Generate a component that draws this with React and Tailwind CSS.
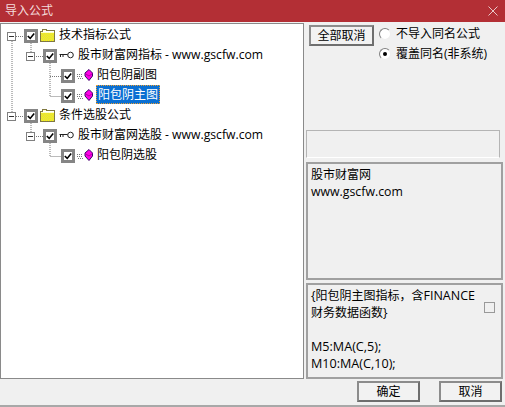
import React from 'react';

const FONT = '"Open Sans", "Noto Sans CJK SC", sans-serif';

const Expander = () => (
  <span className="w-[9px] h-[9px] border border-[#808080] bg-white flex items-center justify-center shrink-0">
    <span className="w-[5px] h-px bg-[#333]" />
  </span>
);

const Check = () => (
  <span className="w-[14px] h-[14px] border-[3px] border-[#858585] bg-white flex items-center justify-center shrink-0">
    <svg width="10" height="10" viewBox="0 0 10 10">
      <path d="M1 5 L4 8 L9 2" fill="none" stroke="#000" strokeWidth="2" />
    </svg>
  </span>
);

const Folder = ({ id }) => (
  <svg width="16" height="13" viewBox="0 0 16 13" className="shrink-0 -mr-[2px] -mt-[2px]" shapeRendering="crispEdges">
    <defs>
      <pattern id={id} width="2" height="2" patternUnits="userSpaceOnUse">
        <rect width="2" height="2" fill="#ffff00" />
        <rect width="1" height="1" fill="#d8d060" />
        <rect x="1" y="1" width="1" height="1" fill="#d8d060" />
      </pattern>
    </defs>
    <rect x="1" y="3" width="14" height="9" fill={`url(#${id})`} />
    <path d="M2.5 0.5 H6.5 V1.5 H14.5 V12.5 H0.5 V2.5 H2.5 Z" fill="none" stroke="#807840" />
    <path d="M1 3.5 H14 M3 1.5 H6" stroke="#ffffc8" />
  </svg>
);

const KeyIcon = () => (
  <svg width="15" height="9" viewBox="0 0 15 9" className="shrink-0 -mr-px -mt-[2px]">
    <circle cx="11.5" cy="4" r="2.8" fill="#fff" stroke="#222" />
    <path d="M0.5 3.5 L8.5 3.5 M1.5 3.5 L1.5 6 M4 3.5 L4 6" stroke="#222" fill="none" />
  </svg>
);

const FormulaIcon = () => (
  <svg width="16" height="12" viewBox="0 0 16 12" className="shrink-0 -mr-px -mt-[2px]">
    <path d="M0 5.5 H5 M0 7.5 H6 M1 9.5 H6" stroke="#777" strokeDasharray="1 1" />
    <path d="M12 0.5 L15.5 4 L15.5 7 L12 11.5 L8 7 L8 4 Z" fill="#ff00e8" stroke="#380868" />
    <path d="M8 4.5 L12 7 L15.5 4.5" fill="none" stroke="#b000a0" />
  </svg>
);

const Row = ({ indent, expander, icon, label, selected }) => (
  <div className="h-5 flex items-center" style={{ paddingLeft: indent }}>
    {expander && <span className="mr-[8px]"><Expander /></span>}
    <Check />
    <span className="ml-[2px] mr-[4px] flex items-center">{icon}</span>
    {selected ? (
      <span className="h-[19px] mb-[3px] px-px flex items-center text-white bg-[#0a6fd2] border border-dotted border-[#f0a030]">{label}</span>
    ) : (
      <span className="px-px mb-[2px]">{label}</span>
    )}
  </div>
);

const Site = () => <span className="text-[12.2px]">www.gscfw.com</span>;

const Tree = () => (
  <div className="relative w-[304px] border border-[#8a8a8a] bg-white pt-[2px] text-[12px] text-black">
    {/* dotted connectors */}
    <svg width="110" height="150" className="absolute left-0 top-0" fill="none" stroke="#777" strokeDasharray="1 1">
      <path d="M11 17 V92" />
      <path d="M15 12.5 H23" />
      <path d="M30 19 V28" />
      <path d="M35 32.5 H42" />
      <path d="M49 39 V72.5 H61 M49 52.5 H61" />
      <path d="M15 92.5 H23" />
      <path d="M30 99 V108" />
      <path d="M35 112.5 H42" />
      <path d="M49 119 V132.5 H61" />
    </svg>
    <div className="relative">
      <Row indent={6} expander icon={<Folder id="dither1" />} label="技术指标公式" />
      <Row indent={25} expander icon={<KeyIcon />} label={<>股市财富网指标 - <Site /></>} />
      <Row indent={60} icon={<FormulaIcon />} label="阳包阴副图" />
      <Row indent={60} icon={<FormulaIcon />} label="阳包阴主图" selected />
      <Row indent={6} expander icon={<Folder id="dither2" />} label="条件选股公式" />
      <Row indent={25} expander icon={<KeyIcon />} label={<>股市财富网选股 - <Site /></>} />
      <Row indent={60} icon={<FormulaIcon />} label="阳包阴选股" />
    </div>
  </div>
);

const Radio = ({ checked, label }) => (
  <div className="h-5 flex items-center">
    <span className="w-[12px] h-[12px] rounded-full bg-white border border-t-[#808080] border-l-[#808080] border-r-[#eee] border-b-[#eee] flex items-center justify-center shrink-0">
      {checked && <span className="w-[4px] h-[4px] rounded-full bg-black" />}
    </span>
    <span className="ml-[5px]">{label}</span>
  </div>
);

const Button = ({ label, className }) => (
  <button className={`h-[21px] border-2 border-t-[#8c8c8c] border-l-[#8c8c8c] border-r-[#6e6e6e] border-b-[#6e6e6e] bg-[#f2f2f2] text-[12px] text-black flex items-center justify-center ${className}`}>
    {label}
  </button>
);

const App = () => (
  <div className="w-[505px] h-[407px] flex flex-col bg-[#f0f0f0] overflow-hidden border-b-2 border-[#a8a8a8]" style={{ fontFamily: FONT }}>
    <div className="h-[22px] bg-[#b32f35] flex items-center justify-between pl-[5px] pr-[7px] text-[12px] text-[#f3dcdc] shrink-0">
      <span>导入公式</span>
      <svg width="10" height="10" viewBox="0 0 10 10">
        <path d="M0.5 0.5 L9.5 9.5 M9.5 0.5 L0.5 9.5" stroke="#e8c8c8" />
      </svg>
    </div>
    <div className="flex pt-px h-[357px]">
      <Tree />
      <div className="ml-[2px] w-[197px] flex flex-col text-[12px] text-black">
        <div className="h-[107px] flex items-start pl-[3px] pt-px">
          <Button label="全部取消" className="w-[65px] mt-px" />
          <div className="ml-[5px]">
            <Radio label="不导入同名公式" />
            <Radio checked label="覆盖同名(非系统)" />
          </div>
        </div>
        <div className="h-[28px] w-[194px] border border-t-[#b4b4b4] border-l-[#b4b4b4] border-r-[#b4b4b4] border-b-white" />
        <div className="mt-[4px] h-[118px] border-2 border-[#a0a0a0] px-[3px] pt-[2px] leading-[18px]">
          <div>股市财富网</div>
          <div className="text-[12.3px] -mt-px">www.gscfw.com</div>
        </div>
        <div className="relative mt-[3px] flex-1 border-2 border-[#a0a0a0] px-[3px] pt-[2px] leading-[17px]">
          <div>{'{'}阳包阴主图指标，含<span className="text-[12.5px]">FINANCE</span></div>
          <div>财务数据函数{'}'}</div>
          <div className="h-[17px]" />
          <div className="text-[12.6px]">M5:MA(C,5);</div>
          <div className="text-[12.6px]">M10:MA(C,10);</div>
          <span className="absolute right-[6px] top-[17px] w-[11px] h-[11px] border border-[#999] bg-[#f0f0f0]" />
        </div>
      </div>
    </div>
    <div className="flex justify-end pt-[2px] pr-[3px] gap-[19px]">
      <Button label="确定" className="w-[63px]" />
      <Button label="取消" className="w-[63px]" />
    </div>
  </div>
);

export default App;
